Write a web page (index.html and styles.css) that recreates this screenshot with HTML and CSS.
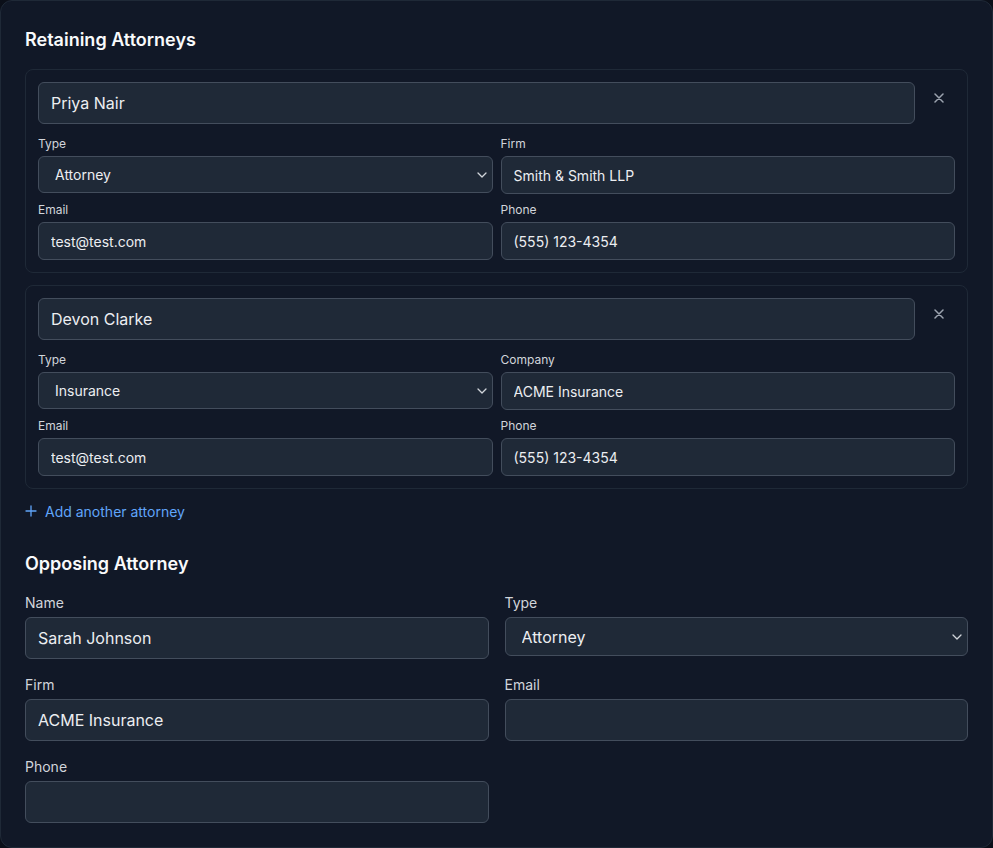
FILE: index.html
```html
<!DOCTYPE html>
<html lang="en">
<head>
  <meta charset="UTF-8">
  <meta name="viewport" content="width=device-width, initial-scale=1.0">
  <title>Attorneys</title>
  <link rel="stylesheet" href="styles.css">
</head>
<body>

<div class="panel">
  <h2 class="section-title">Retaining Attorneys</h2>

  <div class="attorney-list">
    <div class="attorney-card">
      <div class="name-row">
        <input type="text" class="name-input" value="Priya Nair">
        <button class="remove-btn" title="Remove">
          <svg width="10" height="10" viewBox="0 0 10 10"><path d="M1 1L9 9M9 1L1 9" stroke="currentColor" stroke-width="1.5" stroke-linecap="round"/></svg>
        </button>
      </div>
      <div class="small-grid">
        <div class="field">
          <label>Type</label>
          <div class="select-wrap">
            <select class="small-input">
              <option selected>Attorney</option>
              <option>Insurance</option>
            </select>
            <svg class="chevron" width="10" height="6" viewBox="0 0 10 6"><path d="M1 1l4 4 4-4" fill="none" stroke="currentColor" stroke-width="1.3" stroke-linecap="round" stroke-linejoin="round"/></svg>
          </div>
        </div>
        <div class="field">
          <label>Firm</label>
          <input type="text" class="small-input" value="Smith &amp; Smith LLP">
        </div>
        <div class="field">
          <label>Email</label>
          <input type="text" class="small-input" value="test@test.com">
        </div>
        <div class="field">
          <label>Phone</label>
          <input type="text" class="small-input" value="(555) 123-4354">
        </div>
      </div>
    </div>

    <div class="attorney-card">
      <div class="name-row">
        <input type="text" class="name-input" value="Devon Clarke">
        <button class="remove-btn" title="Remove">
          <svg width="10" height="10" viewBox="0 0 10 10"><path d="M1 1L9 9M9 1L1 9" stroke="currentColor" stroke-width="1.5" stroke-linecap="round"/></svg>
        </button>
      </div>
      <div class="small-grid">
        <div class="field">
          <label>Type</label>
          <div class="select-wrap">
            <select class="small-input">
              <option>Attorney</option>
              <option selected>Insurance</option>
            </select>
            <svg class="chevron" width="10" height="6" viewBox="0 0 10 6"><path d="M1 1l4 4 4-4" fill="none" stroke="currentColor" stroke-width="1.3" stroke-linecap="round" stroke-linejoin="round"/></svg>
          </div>
        </div>
        <div class="field">
          <label>Company</label>
          <input type="text" class="small-input" value="ACME Insurance">
        </div>
        <div class="field">
          <label>Email</label>
          <input type="text" class="small-input" value="test@test.com">
        </div>
        <div class="field">
          <label>Phone</label>
          <input type="text" class="small-input" value="(555) 123-4354">
        </div>
      </div>
    </div>
  </div>

  <button class="add-link">
    <svg width="12" height="12" viewBox="0 0 12 12"><path d="M6 1v10M1 6h10" stroke="currentColor" stroke-width="1.3" stroke-linecap="round"/></svg>
    Add another attorney
  </button>

  <h2 class="section-title opposing-title">Opposing Attorney</h2>

  <div class="big-grid">
    <div class="field big">
      <label>Name</label>
      <input type="text" class="big-input" value="Sarah Johnson">
    </div>
    <div class="field big">
      <label>Type</label>
      <div class="select-wrap">
        <select class="big-input big-select">
          <option selected>Attorney</option>
          <option>Insurance</option>
        </select>
        <svg class="chevron" width="10" height="6" viewBox="0 0 10 6"><path d="M1 1l4 4 4-4" fill="none" stroke="currentColor" stroke-width="1.3" stroke-linecap="round" stroke-linejoin="round"/></svg>
      </div>
    </div>
    <div class="field big">
      <label>Firm</label>
      <input type="text" class="big-input" value="ACME Insurance">
    </div>
    <div class="field big">
      <label>Email</label>
      <input type="text" class="big-input" value="">
    </div>
    <div class="field big">
      <label>Phone</label>
      <input type="text" class="big-input" value="">
    </div>
  </div>
</div>

</body>
</html>
```

FILE: styles.css
```css
* {
  box-sizing: border-box;
}
body {
  margin: 0;
  padding: 0;
  font-family: Inter, "Noto Sans", sans-serif;
  background-color: #0b0f19;
  color: #f3f4f6;
}
.panel {
  width: 993px;
  height: 848px;
  padding: 24px;
  background-color: #111827;
  border: 1px solid #1f2937;
  border-radius: 12px;
}
.section-title {
  margin: 0 0 16px;
  padding-top: 1px;
  font-size: 18px;
  line-height: 27px;
  font-weight: 600;
  color: #f9fafb;
}
.attorney-list {
  display: flex;
  flex-direction: column;
  gap: 12px;
}
.attorney-card {
  padding: 12px;
  border: 1px solid #1f2937;
  border-radius: 8px;
}
.name-row {
  display: flex;
  align-items: flex-start;
  gap: 8px;
  margin-bottom: 12px;
}
.name-input {
  flex: 1;
  height: 42px;
  padding: 0 12px;
  font-family: inherit;
  font-size: 16px;
  color: #eceef1;
  background-color: #1f2937;
  border: 1px solid #434d5c;
  border-radius: 6px;
  outline: none;
}
.remove-btn {
  width: 32px;
  height: 32px;
  display: flex;
  align-items: center;
  justify-content: center;
  padding: 0;
  background: none;
  border: none;
  color: #9ca3af;
  cursor: pointer;
}
.small-grid {
  display: grid;
  grid-template-columns: 1fr 1fr;
  gap: 8px;
}
.field {
  display: flex;
  flex-direction: column;
}
.field label {
  font-size: 12px;
  line-height: 16px;
  margin-bottom: 4px;
  color: #d1d5db;
}
.small-input {
  width: 100%;
  height: 38px;
  padding: 0 12px;
  font-family: inherit;
  font-size: 14px;
  color: #eceef1;
  background-color: #1f2937;
  border: 1px solid #434d5c;
  border-radius: 6px;
  outline: none;
}
select.small-input {
  height: 37px;
  padding-left: 16px;
  appearance: none;
  -webkit-appearance: none;
}
.select-wrap {
  position: relative;
}
.chevron {
  position: absolute;
  right: 6px;
  top: 50%;
  margin-top: -3px;
  color: #d1d5db;
  pointer-events: none;
}
.add-link {
  display: flex;
  align-items: center;
  gap: 8px;
  margin-top: 12px;
  padding: 0;
  height: 20px;
  background: none;
  border: none;
  font-family: inherit;
  font-size: 14px;
  color: #60a5fa;
  cursor: pointer;
}
.opposing-title {
  margin-top: 28px;
}
.big-grid {
  display: grid;
  grid-template-columns: 1fr 1fr;
  column-gap: 16px;
  row-gap: 16px;
}
.field.big label {
  font-size: 14px;
  line-height: 20px;
}
.big-input {
  width: 100%;
  height: 42px;
  padding: 0 12px;
  font-family: inherit;
  font-size: 16px;
  color: #eceef1;
  background-color: #1f2937;
  border: 1px solid #434d5c;
  border-radius: 6px;
  outline: none;
}
.big-select {
  height: 39px;
  padding-left: 16px;
  appearance: none;
  -webkit-appearance: none;
}
```
